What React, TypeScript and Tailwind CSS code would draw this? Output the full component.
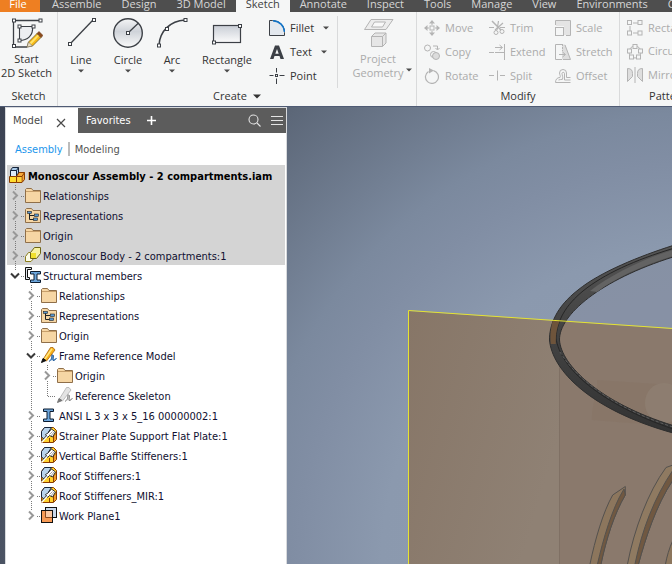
import type { ReactNode } from 'react';

const tabsBefore = ['Assemble', 'Design', '3D Model'];
const tabsAfter = ['Annotate', 'Inspect', 'Tools', 'Manage', 'View', 'Environments', 'Collaborate'];

/* ---------- Ribbon icons ---------- */

const handle = { width: 3, height: 3, fill: '#fff', stroke: '#3c4046', strokeWidth: 1 };
const dimHandle = { width: 4, height: 4, fill: '#f5f6f6', stroke: '#b4b4b4', strokeWidth: 1 };

function Big({ children }: { children: ReactNode }) {
  return (
    <svg width="32" height="32" viewBox="0 0 32 32" fill="none" stroke="#3c4046" strokeWidth="1.3" aria-hidden="true">
      {children}
    </svg>
  );
}

function Small({ children, color = '#b4b4b4' }: { children: ReactNode; color?: string }) {
  return (
    <svg className="shrink-0" width="16" height="16" viewBox="0 0 16 16" fill="none" stroke={color} aria-hidden="true">
      {children}
    </svg>
  );
}

function StartSketchIcon() {
  return (
    <Big>
      <path d="M29 4.500H2.500V31H16" />
      <path d="M8.500 10.500h13c1 9-5 14-13 14z" fill="#eceef1" strokeWidth="1.100" />
      <rect x="1.500" y="3" {...handle} />
      <rect x="28" y="3" {...handle} />
      <rect x="1.500" y="28.500" {...handle} />
      <rect x="7" y="9" {...handle} />
      <rect x="21" y="9" {...handle} />
      <rect x="7" y="23" {...handle} />
      <path d="M16 31l1.500-5L26 17.500l4 4-8.500 8.500z" fill="#f7b916" stroke="#6b5a2c" strokeWidth="0.800" />
      <path d="M18.500 27L27 18.500l1.200 1.200L20 28.500z" fill="#ffe46b" stroke="none" />
      <path d="M16 31l1.500-5 4 4z" fill="#e9dcc4" stroke="#77705f" strokeWidth="0.600" />
      <path d="M26 17.500l2-2 4 4-2 2z" fill="#8a4a1c" stroke="#6b3a18" strokeWidth="0.600" />
    </Big>
  );
}

function LineIcon() {
  return (
    <Big>
      <path d="M5 28L28 4" />
      <rect x="3.500" y="26.500" {...handle} />
      <rect x="27.500" y="2.500" {...handle} />
    </Big>
  );
}

function CircleIcon() {
  return (
    <Big>
      <defs>
        <linearGradient id="disc" x1="0" y1="0" x2="0" y2="1">
          <stop offset="0" stopColor="#f4f5f6" />
          <stop offset="0.450" stopColor="#cfd3d9" />
          <stop offset="1" stopColor="#fafafa" />
        </linearGradient>
      </defs>
      <circle cx="16" cy="17" r="14.300" fill="url(#disc)" strokeWidth="1.400" />
      <path d="M16 17L26.500 7" />
      <rect x="14.500" y="15.500" {...handle} />
    </Big>
  );
}

function ArcIcon() {
  return (
    <Big>
      <path d="M3 29C4 15 14 5 29 4" strokeWidth="1.500" />
      <rect x="1.500" y="28" {...handle} />
      <rect x="9.500" y="11.500" {...handle} />
      <rect x="28" y="2.500" {...handle} />
    </Big>
  );
}

function RectangleIcon() {
  return (
    <Big>
      <defs>
        <linearGradient id="sheet" x1="0" y1="0" x2="0" y2="1">
          <stop offset="0" stopColor="#c9ced6" />
          <stop offset="1" stopColor="#fbfbfb" />
        </linearGradient>
      </defs>
      <rect x="2.500" y="9.500" width="27" height="17" fill="url(#sheet)" strokeWidth="1.200" />
      <rect x="1.500" y="25" {...handle} />
      <rect x="27.500" y="8.500" {...handle} />
    </Big>
  );
}

function ProjectIcon() {
  return (
    <Big>
      <g stroke="#b4b4b4" strokeWidth="1">
        <path d="M9 3.500h22l-7 10H2.500z" fill="#ececec" />
        <path d="M12.500 6h11l-3 5H9.500z" fill="#f8f8f8" />
        <path d="M9.500 20.500l3.500-3.500h11v10l-3.500 3.500h-11z" fill="#e6e6e6" />
        <path d="M9.500 20.500h11v10M20.500 20.500l3.500-3.500" />
      </g>
    </Big>
  );
}

const smallIcons: Record<string, ReactNode> = {
  Fillet: (
    <Small color="#3c4046">
      <path d="M.5 15.500V.5h3c7 .5 12 5 12 12v3z" fill="#e3e8ee" />
      <path d="M4 .7c6.500.3 11.300 5 11.500 11.300" stroke="#1173c7" strokeWidth="1.500" />
    </Small>
  ),
  Text: (
    <Small color="none">
      <path d="M6 1.500h4L15 15h-3.500l-1-3h-5l-1 3H1zM8 5l-1.700 4.700h3.400z" fill="#3c4046" fillRule="evenodd" />
    </Small>
  ),
  Point: (
    <Small color="#3c4046">
      <path d="M.5 7.500h4M10.500 7.500h5M7.500 0v4.500M7.500 10.500V16" />
      <rect x="6.500" y="6.500" width="2" height="2" />
    </Small>
  ),
  Move: (
    <Small>
      <rect x="6" y="6" width="4" height="4" />
      <path d="M8 0l3 3.500H5zM8 16l3-3.500H5zM0 8l3.500-3v6zM16 8l-3.500-3v6z" fill="#b4b4b4" stroke="none" />
      <path d="M8 3v2M8 11v2M3 8h2M11 8h2" />
    </Small>
  ),
  Copy: (
    <Small>
      <circle cx="3.500" cy="4" r="3" />
      <path d="M9 2h4.500v3.500M11.500 4l2 2 2-2" />
      <circle cx="9.500" cy="10.500" r="3" fill="#f5f6f6" />
      <circle cx="12" cy="12" r="3.500" fill="#dcdcdc" />
    </Small>
  ),
  Rotate: (
    <Small>
      <path d="M9.500 2.600a6.500 6.500 0 1 1-5 .8" strokeWidth="1.200" />
      <path d="M5 0l5 2.500-5 3z" fill="#b4b4b4" stroke="none" />
    </Small>
  ),
  Trim: (
    <Small>
      <path d="M0 7.500h5M11 7.500h5" />
      <path d="M3 1l9 9" strokeWidth="1.500" />
      <path d="M9.500 1L8 10" strokeWidth="1.200" />
      <path d="M14 3L6 10" strokeWidth="1.200" />
      <circle cx="7" cy="12.500" r="2" />
      <circle cx="13" cy="11.500" r="2" />
    </Small>
  ),
  Extend: (
    <Small>
      <path d="M0 8.500h5M6 8.500h9M6 3.500h7M10.500 1l3 2.500-3 2.500M15.500 0v16" />
    </Small>
  ),
  Split: (
    <Small>
      <path d="M0 7.500h5M11 7.500h5M8.500 2.500v10" />
    </Small>
  ),
  Scale: (
    <Small>
      <path d="M1 6V1h14v14H9V6z" fill="#e4e4e4" stroke="none" />
      <path d="M.5 5V.5h15v15H11" />
      <rect x="0.500" y="7.500" width="8" height="8" fill="#f5f6f6" />
    </Small>
  ),
  Stretch: (
    <Small>
      <path d="M7 .5h3l5.500 15H7z" fill="#dedede" stroke="none" />
      <path d="M7 .5H.5v15H7M10 1l5.500 14.500H8" />
      <path d="M4 10.500h6M7.500 8l3 2.500-3 2.500" />
      <path d="M7.500 0v7" strokeDasharray="2 1" />
    </Small>
  ),
  Offset: (
    <Small>
      <path d="M.5 14.500c0-3 1.500-5 4.500-5 1-1.500-.5-2.500-.5-4.500a3.500 3.500 0 0 1 7 0v4.500h4M.5 14.500h15" />
      <path d="M3.500 12c1-.7 3-.3 4-.7.8-2-.5-4-.5-6a1.300 1.300 0 0 1 2.500 0V12h6" />
    </Small>
  ),
  Rectangular: (
    <Small>
      <path d="M6 3h5M3 6v5M6 13h5" />
      <rect x="0.500" y="0.500" {...dimHandle} />
      <rect x="11" y="0.500" {...dimHandle} />
      <rect x="0.500" y="11" {...dimHandle} />
      <rect x="11" y="11" {...dimHandle} />
    </Small>
  ),
  Circular: (
    <Small>
      <circle cx="8" cy="8" r="6" />
      <rect x="6" y="0.500" {...dimHandle} />
      <rect x="0.500" y="5" {...dimHandle} />
      <rect x="11.500" y="5" {...dimHandle} />
      <rect x="2.500" y="11" {...dimHandle} />
      <rect x="9.500" y="11" {...dimHandle} />
    </Small>
  ),
  Mirror: (
    <Small>
      <path d="M.5 14.500v-13c3.500 0 5 1.500 5 5v3zM15.500 14.500v-13c-3.500 0-5 1.500-5 5v3z" fill="#dedede" />
      <path d="M8 0v16" />
    </Small>
  ),
};

function Caret({ className = '' }: { className?: string }) {
  return (
    <svg className={className} width="6" height="4" viewBox="0 0 6 4" aria-hidden="true">
      <path d="M0 .5h6L3 3.500z" fill="#4a4a4a" />
    </svg>
  );
}

/* ---------- Ribbon ---------- */

function BigTool({ label, icon, className }: { label: string; icon: ReactNode; className: string }) {
  return (
    <button type="button" className={`flex flex-col items-center ${className}`}>
      {icon}
      <span className="mt-1 leading-4">{label}</span>
      <Caret className="mt-px" />
    </button>
  );
}

function SmallTool({ label, menu = false, disabled = false }: { label: string; menu?: boolean; disabled?: boolean }) {
  return (
    <button
      type="button"
      disabled={disabled}
      className="flex h-6 items-center gap-[5px] text-[#333] disabled:text-[#ababab]"
    >
      {smallIcons[label]}
      <span>{label}</span>
      {menu && <Caret className="ml-1" />}
    </button>
  );
}

function PanelTitle({ children }: { children: ReactNode }) {
  return <div className="mt-auto flex h-[18px] items-center justify-center gap-[6px] text-[#333]">{children}</div>;
}

function Ribbon() {
  return (
    <div className="flex h-[94px] shrink-0 overflow-hidden whitespace-nowrap bg-[#f5f6f6]">
      <section className="flex w-[58px] shrink-0 flex-col border-r border-[#d9dadb] pt-1 pb-px">
        <button type="button" className="flex flex-col items-center pr-1">
          <StartSketchIcon />
          <span className="mt-1 leading-[14px]">
            Start
            <br />
            2D Sketch
          </span>
        </button>
        <PanelTitle>Sketch</PanelTitle>
      </section>

      <section className="flex w-[359px] shrink-0 flex-col border-r border-[#d9dadb] pt-1 pb-px">
        <div className="flex">
          <BigTool label="Line" icon={<LineIcon />} className="w-[46px]" />
          <BigTool label="Circle" icon={<CircleIcon />} className="w-12" />
          <BigTool label="Arc" icon={<ArcIcon />} className="w-10" />
          <BigTool label="Rectangle" icon={<RectangleIcon />} className="w-[70px]" />
          <div className="ml-[7px] w-[69px] border-r border-[#d9dadb]">
            <SmallTool label="Fillet" menu />
            <SmallTool label="Text" menu />
            <SmallTool label="Point" />
          </div>
          <button type="button" disabled className="relative flex flex-1 flex-col items-center pl-[2px] text-[#ababab]">
            <ProjectIcon />
            <span className="mt-1 leading-[14px]">
              Project
              <br />
              Geometry
            </span>
            <Caret className="absolute right-1 bottom-4" />
          </button>
        </div>
        <PanelTitle>
          Create
          <svg width="8" height="5" viewBox="0 0 8 5" aria-hidden="true">
            <path d="M0 .5h8L4 4.500z" fill="#333" />
          </svg>
        </PanelTitle>
      </section>

      <section className="flex w-[203px] shrink-0 flex-col border-r border-[#d9dadb] pt-1 pb-px">
        <div className="flex pl-[7px]">
          <div className="w-[65px]">
            <SmallTool label="Move" disabled />
            <SmallTool label="Copy" disabled />
            <SmallTool label="Rotate" disabled />
          </div>
          <div className="w-[66px]">
            <SmallTool label="Trim" disabled />
            <SmallTool label="Extend" disabled />
            <SmallTool label="Split" disabled />
          </div>
          <div>
            <SmallTool label="Scale" disabled />
            <SmallTool label="Stretch" disabled />
            <SmallTool label="Offset" disabled />
          </div>
        </div>
        <PanelTitle>Modify</PanelTitle>
      </section>

      <section className="flex shrink-0 flex-col px-[7px] pt-1 pb-px">
        <SmallTool label="Rectangular" disabled />
        <SmallTool label="Circular" disabled />
        <SmallTool label="Mirror" disabled />
        <PanelTitle>Pattern</PanelTitle>
      </section>
    </div>
  );
}

/* ---------- Browser tree ---------- */

function TreeIcon({ children }: { children: ReactNode }) {
  return (
    <svg className="shrink-0" width="16" height="20" viewBox="0 -3 16 20" aria-hidden="true">
      {children}
    </svg>
  );
}

const folderShape = (
  <path d="M.5 14.500v-13l1-1h5l1.500 2h7.500v12z" fill="#f6d6a4" stroke="#8f6f4a" />
);

const treeIcons: Record<string, ReactNode> = {
  assembly: (
    <TreeIcon>
      <path d="M1.500 2.500l2-3h6V5l-2 3h-6z" fill="#a9c9e8" stroke="#16243a" />
      <path d="M2 3h5v5H2z" fill="#dcebf8" />
      <path d="M1.500 2.500H7.500V8M7.500 2.500l2-3" fill="none" stroke="#16243a" />
      <path d="M.5 8.500h7v6h-7z" fill="#ffdc2e" stroke="#8a3c00" />
      <path d="M7.500 8.500l2.500-4h5.500V11.500l-2.500 3H7.500z" fill="#f6a93b" stroke="#8a3c00" />
      <path d="M8 8.500h5V14M13 8.500l2.500-4" fill="none" stroke="#8a3c00" />
      <path d="M8 9h4.500v5H8z" fill="#ffd23a" />
    </TreeIcon>
  ),
  folder: (
    <TreeIcon>
      {folderShape}
      <path d="M1 3.500h14" stroke="#c79f6b" />
    </TreeIcon>
  ),
  representations: (
    <TreeIcon>
      {folderShape}
      <path d="M4.500 4.500v7H9M4.500 7.500H9" fill="none" stroke="#222" />
      <rect x="2.500" y="3.500" width="4" height="2" fill="#5b9bd5" stroke="#222" strokeWidth="0.600" />
      <rect x="9.500" y="6" width="4" height="2.500" fill="#5b9bd5" stroke="#222" strokeWidth="0.600" />
      <rect x="8.500" y="10" width="4" height="2.500" fill="#5b9bd5" stroke="#222" strokeWidth="0.600" />
    </TreeIcon>
  ),
  body: (
    <TreeIcon>
      <path d="M.5 8.500l3-4h6v5l-3.500 4H.5z" fill="#fbfae6" stroke="#8a7d1c" />
      <path d="M5.500 4.500L9.500-.5h6v6l-4 5h-6z" fill="#f8f2a0" stroke="#6d6414" />
      <path d="M6 5h5v5H6z" fill="#f0e02c" />
    </TreeIcon>
  ),
  structural: (
    <TreeIcon>
      <path d="M6.500-.5h-6v12h4v-2h-2v-8h4z" fill="#e2e6ec" stroke="#111" />
      <path d="M5.500 3.500h10V6H12v6h3.500v2.500h-10V12H9V6H5.500z" fill="#6ca6dc" stroke="#0c1c30" />
    </TreeIcon>
  ),
  pencil: (
    <TreeIcon>
      <path d="M8 13.500c3-2 3-5 2.500-7l2 1-.5 5c1.500.3 2.500-1 3.500-2.500" fill="#5b9bd5" stroke="#2c62a0" />
      <path d="M2 11.500L9.500-.5H12l2 2.500L5.500 13z" fill="#f9b21b" stroke="#a8620e" strokeWidth="0.800" />
      <path d="M3.800 11L11 .8" stroke="#ffe680" strokeWidth="1.500" />
      <path d="M.5 14.500L2 10.500l3 2z" fill="#111" stroke="#111" />
    </TreeIcon>
  ),
  pencilOff: (
    <TreeIcon>
      <path d="M8 13.500c3-2 3-5 2.500-7l2 1-.5 5c1.500.3 2.500-1 3.500-2.500" fill="#ccc" stroke="#8a8a8a" />
      <path d="M2 11.500L9.500-.5H12l2 2.500L5.500 13z" fill="#e4e4e4" stroke="#b0b0b0" strokeWidth="0.800" />
      <path d="M.5 14.500L2 10.500l3 2z" fill="#777" stroke="#777" />
    </TreeIcon>
  ),
  beam: (
    <TreeIcon>
      <path d="M2.500 1h10v2.500H9v7.500h3.500v2.500h-10V11H6V3.500H2.500z" fill="#6ca6dc" stroke="#0c1c30" />
    </TreeIcon>
  ),
  part: (
    <TreeIcon>
      <path d="M.5 3.500l3-4h9l3 3v9l-3 3H.5z" fill="#ffd12e" stroke="#8a3c00" />
      <path d="M.5 9V3.500l3-4h7L7.500 4v3L3 11z" fill="#b9d4ec" stroke="#16243a" />
      <path d="M8.500 14v-4M12.500 14V8l3-3" fill="none" stroke="#8a3c00" />
      <path d="M13 8.500l2-2V11l-2 2.500z" fill="#f0972c" />
      <path d="M4.500 6.500L7 5l3.500-4 4 3-3 5-3-1.500-2 2z" fill="#fff" stroke="#222" strokeWidth="0.900" />
      <path d="M8.500 6.500l3-3M10 8l3-4" stroke="#777" strokeWidth="0.700" />
      <path d="M.5 14.500L6 8.500" stroke="#fff" strokeWidth="1.500" />
      <path d="M.5 13L5.500 7.500" stroke="#333" strokeWidth="0.800" />
    </TreeIcon>
  ),
  plane: (
    <TreeIcon>
      <rect x="4.500" y="-0.500" width="11" height="10" fill="#c9d8ec" stroke="#111" />
      <rect x="0.500" y="2.500" width="11" height="12" fill="#f79a55" stroke="#111" />
      <path d="M5 3h6v6H5z" fill="#fbc9a4" />
      <path d="M4.500 3v6.500H11" fill="none" stroke="#8b4a1e" />
    </TreeIcon>
  ),
};

type TreeNode = {
  label: string;
  icon: string;
  depth: number;
  state: 'closed' | 'open' | 'leaf';
  last?: boolean;
  selected?: boolean;
};

const treeNodes: TreeNode[] = [
  { label: 'Relationships', icon: 'folder', depth: 0, state: 'closed', selected: true },
  { label: 'Representations', icon: 'representations', depth: 0, state: 'closed', selected: true },
  { label: 'Origin', icon: 'folder', depth: 0, state: 'closed', selected: true },
  { label: 'Monoscour Body - 2 compartments:1', icon: 'body', depth: 0, state: 'closed', selected: true },
  { label: 'Structural members', icon: 'structural', depth: 0, state: 'open', last: true },
  { label: 'Relationships', icon: 'folder', depth: 1, state: 'closed' },
  { label: 'Representations', icon: 'representations', depth: 1, state: 'closed' },
  { label: 'Origin', icon: 'folder', depth: 1, state: 'closed' },
  { label: 'Frame Reference Model', icon: 'pencil', depth: 1, state: 'open' },
  { label: 'Origin', icon: 'folder', depth: 2, state: 'closed' },
  { label: 'Reference Skeleton', icon: 'pencilOff', depth: 2, state: 'leaf', last: true },
  { label: 'ANSI L 3 x 3 x 5_16 00000002:1', icon: 'beam', depth: 1, state: 'closed' },
  { label: 'Strainer Plate Support Flat Plate:1', icon: 'part', depth: 1, state: 'closed' },
  { label: 'Vertical Baffle Stiffeners:1', icon: 'part', depth: 1, state: 'closed' },
  { label: 'Roof Stiffeners:1', icon: 'part', depth: 1, state: 'closed' },
  { label: 'Roof Stiffeners_MIR:1', icon: 'part', depth: 1, state: 'closed' },
  { label: 'Work Plane1', icon: 'plane', depth: 1, state: 'closed', last: true },
];

function Branch({ state, last }: { state: TreeNode['state']; last?: boolean }) {
  return (
    <svg width="18" height="20" viewBox="0 0 18 20" fill="none" aria-hidden="true">
      <g stroke="#7a7a7a" strokeDasharray="1 1">
        <path d={state === 'leaf' ? 'M8.500 0v11' : 'M8.500 0v5'} />
        {!last && <path d="M8.500 16v4" />}
        <path d={state === 'leaf' ? 'M9 11.500h8' : 'M14 11.500h3'} />
      </g>
      {state === 'closed' && <path d="M6 6.500l4 4-4 4" stroke="#989898" strokeWidth="2" />}
      {state === 'open' && <path d="M4 8.500l4 4 4-4" stroke="#3a3a3a" strokeWidth="2" />}
    </svg>
  );
}

function TreeRow({ node }: { node: TreeNode }) {
  return (
    <li className={`flex h-5 items-center ${node.selected ? 'bg-[#d4d4d4]' : ''}`}>
      {node.depth > 0 && <span className="w-4 shrink-0" />}
      {node.depth > 1 && (
        <svg className="shrink-0" width="16" height="20" viewBox="0 0 16 20" aria-hidden="true">
          <path d="M8.500 0v20" stroke="#7a7a7a" strokeDasharray="1 1" />
        </svg>
      )}
      {node.state === 'leaf' ? (
        <Branch state="leaf" last={node.last} />
      ) : (
        <button type="button" aria-label={node.label} aria-expanded={node.state === 'open'}>
          <Branch state={node.state} last={node.last} />
        </button>
      )}
      {treeIcons[node.icon]}
      <span className="pt-1 pl-[2px]">{node.label}</span>
    </li>
  );
}

function ModelBrowser() {
  return (
    <aside className="flex w-[282px] shrink-0 flex-col border-x border-t border-[#d8dadd] bg-white font-['DejaVu_Sans_Condensed','DejaVu_Sans',sans-serif] text-[11px] text-[#101030]">
      <div className="flex h-[25px] items-stretch bg-[#5c5c5c] text-white">
        <div className="flex w-[72px] items-center justify-between bg-white pr-3 pl-[7px] text-[#4a4a4a]">
          <button type="button" className="pt-px">
            Model
          </button>
          <button type="button" aria-label="Close">
            <svg className="mt-1" width="10" height="10" viewBox="0 0 10 10" stroke="#4a4a4a" strokeWidth="1.200" aria-hidden="true">
              <path d="M1 1l8 8M9 1L1 9" />
            </svg>
          </button>
        </div>
        <button type="button" className="px-2 pt-px">
          Favorites
        </button>
        <button type="button" aria-label="Add" className="px-2">
          <svg width="9" height="9" viewBox="0 0 9 9" stroke="#fff" strokeWidth="1.600" aria-hidden="true">
            <path d="M4.500 0v9M0 4.500h9" />
          </svg>
        </button>
        <button type="button" aria-label="Search" className="ml-auto">
          <svg width="13" height="13" viewBox="0 0 13 13" fill="none" stroke="#e4e4e4" strokeWidth="1.100" aria-hidden="true">
            <circle cx="5.500" cy="5.500" r="4.500" />
            <path d="M9 9l3.500 3.500" />
          </svg>
        </button>
        <button type="button" aria-label="Menu" className="mr-[3px] ml-[10px]">
          <svg width="12" height="10" viewBox="0 0 12 10" stroke="#e4e4e4" aria-hidden="true">
            <path d="M0 .5h12M0 4.500h12M0 8.500h12" />
          </svg>
        </button>
      </div>

      <div className="flex h-8 items-center pt-[2px] pl-[9px] text-[#555]">
        <button type="button" className="text-[#1c96ec]">
          Assembly
        </button>
        <span className="mx-[5px] mb-[2px] h-[14px] w-[2px] bg-[#bcbcbc]" />
        <button type="button">Modeling</button>
      </div>

      <ul className="px-px">
        <li className="flex h-5 items-center bg-[#d4d4d4] pl-[2px] font-bold text-black">
          {treeIcons.assembly}
          <span className="pt-1 pl-[3px] whitespace-nowrap">Monoscour Assembly - 2 compartments.iam</span>
        </li>
        {treeNodes.map((node, index) => (
          <TreeRow key={index} node={node} />
        ))}
      </ul>
    </aside>
  );
}

/* ---------- 3D view ---------- */

function ModelView() {
  return (
    <div className="relative min-w-0 flex-1 overflow-hidden">
      <svg
        className="absolute inset-0 h-full w-full"
        viewBox="287 107 385 457"
        preserveAspectRatio="xMinYMin slice"
        fill="none"
        role="img"
        aria-label="Model view"
      >
        <defs>
          <linearGradient id="plateLeft" x1="0" y1="0" x2="1" y2="0.500">
            <stop offset="0" stopColor="#877667" />
            <stop offset="1" stopColor="#8f8174" />
          </linearGradient>
          <linearGradient id="ring" x1="0" y1="0" x2="0" y2="1">
            <stop offset="0" stopColor="#555" />
            <stop offset="0.350" stopColor="#464646" />
            <stop offset="1" stopColor="#333" />
          </linearGradient>
          <clipPath id="behindPlate">
            <rect x="540" y="321" width="40" height="23" />
          </clipPath>
        </defs>

        <path d="M672 257C630 270 560 300 559 337L672 328z" fill="#80879a" opacity="0.450" />
        <path d="M408.500 311L559 321V564H408.500z" fill="url(#plateLeft)" />
        <path d="M559 321l113 8v235H559z" fill="#8a796c" />
        <path d="M559.500 322v242" stroke="#7f7064" />

        <path d="M597 380l75 5v40l-42-2-38-3c-1-15 6-26 5-40z" fill="#84725f" opacity="0.300" />
        <ellipse cx="664" cy="403" rx="19" ry="20" fill="#8f7f72" opacity="0.800" />

        <g stroke="#54514e">
          <path d="M590 564C595 540 603 512 612.700 495L625.300 486.500V495C614 514 606 540 601 564" fill="#8c765d" />
          <path d="M597.500 564C603 540 612 508 624 489L625.300 495C614 514 606 540 601 564" fill="#705841" />
          <path d="M627.500 564C634 530 648 492 666 467.500L673 465V480C656 505 645 540 638.500 564" fill="#8f7a61" />
          <path d="M635 564C642 530 654 498 673 470V480C656 505 645 540 638.500 564" fill="#705841" />
          <path d="M665.500 564C667 556 669 549 673 540V564" fill="#8c765d" />
        </g>

        <path
          d="M673 245.500C640 256 600 272 578 290C556 307 549.500 325 549.500 340C552 370 590 410 673 433V425.500C600 403 561 365 559.500 340C559 315 600 280 673 257z"
          fill="url(#ring)"
          stroke="#2e2e2e"
        />
        <path d="M673 250C645 258 612 274 590 291L597 292C615 278 642 266 673 256z" fill="#636363" />
        <path d="M673 248.500C635 260 604 274 583 291C566 305 557 320 556 338C560 368 600 404 673 429" stroke="#262626" />
        <path d="M560 352C580 385 625 412 673 427" stroke="#676767" strokeWidth="0.800" strokeDasharray="3 2" />
        <g clipPath="url(#behindPlate)">
          <path d="M553.500 318C550 330 550 338 551 346H556C555 336 557 326 561 318z" fill="#6e543b" />
        </g>

        <path d="M408.500 564V310.500L673 328.500" stroke="#e6e331" />
      </svg>
    </div>
  );
}

export default function App() {
  return (
    <div className="flex h-screen flex-col overflow-hidden font-['Open_Sans',sans-serif] text-[11px] text-[#333]">
      <nav className="flex h-3 shrink-0 items-end overflow-hidden whitespace-nowrap bg-[#4e4e4e] leading-4 text-[#d6d6d6]">
        <button type="button" className="mr-[2px] w-10 shrink-0 bg-[#ee7f22] pr-1 text-white">
          File
        </button>
        {tabsBefore.map((tab) => (
          <button key={tab} type="button" className="shrink-0 px-[10px]">
            {tab}
          </button>
        ))}
        <button type="button" className="shrink-0 bg-[#f5f6f6] px-[10px] text-[#404040]">
          Sketch
        </button>
        {tabsAfter.map((tab) => (
          <button key={tab} type="button" className="shrink-0 px-[10px]">
            {tab}
          </button>
        ))}
      </nav>

      <Ribbon />

      <main className="flex min-h-0 flex-1 border-t border-[#4f5b74] bg-[radial-gradient(circle_farthest-corner_at_104%_100%,#929eb4_0%,#8b99ae_38%,#818ea4_48%,#7b899e_54%,#5c6778_73%,#4a5262_84%,#3b4252_100%)] pl-[5px]">
        <ModelBrowser />
        <ModelView />
      </main>
    </div>
  );
}
